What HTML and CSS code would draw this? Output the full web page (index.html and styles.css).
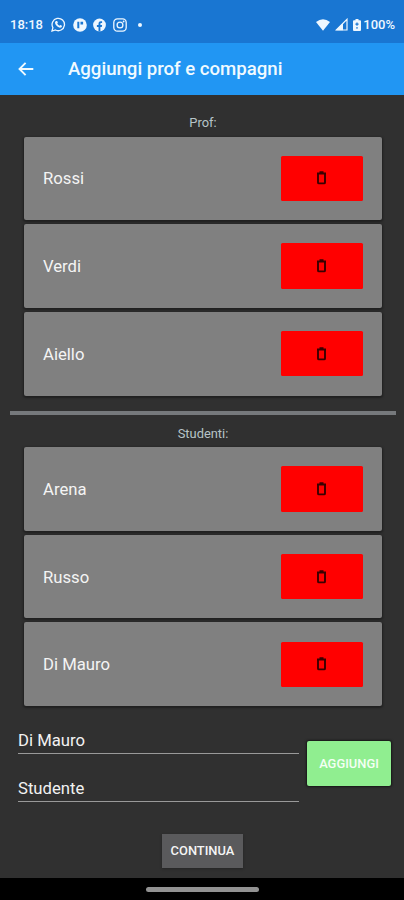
FILE: index.html
```html
<!DOCTYPE html>
<html lang="it">
<head>
<meta charset="utf-8">
<title>Aggiungi prof e compagni</title>
<link rel="stylesheet" href="styles.css">
</head>
<body>
<svg class="defs" aria-hidden="true">
  <symbol id="trash" viewBox="0 0 12 14">
    <path d="M1 2.500h9M3.500 1.200h4" fill="none" stroke="currentColor" stroke-width="2"/>
    <path d="M2 3v8.500q0 .9.9.9h5.200q.9 0 .9-.9V3" fill="none" stroke="currentColor" stroke-width="1.900"/>
  </symbol>
</svg>
<div class="screen">
  <header class="status">
    <span class="time">18:18</span>
    <div class="notifications">
      <svg width="15" height="15" viewBox="0 0 15 15"><path d="M1 14l.9-3.4A6.2 6.2 0 1 1 4.4 13z" fill="none" stroke="currentColor" stroke-width="1.3"/><path d="M5 3.900l1.200.1.7 1.700-.7.9c.5 1 1.200 1.600 2.200 2.100l.9-.8 1.700.8c.1 1.300-.8 2-1.900 2C6.700 10.500 4 7.700 4 5.600c0-.8.4-1.400 1-1.700z" fill="currentColor"/></svg>
      <svg width="14" height="14" viewBox="0 0 14 14"><circle cx="7" cy="7" r="6.800" fill="currentColor"/><path d="M4.300 3.800h2v6.400h-2zM7.500 3.800h2.600v2.600H7.500z" fill="#1976d2"/></svg>
      <svg width="13" height="14" viewBox="0 0 13 14"><circle cx="6.500" cy="7" r="6.400" fill="currentColor"/><path d="M5.500 13.500V9H3.900V7.100h1.600V5.700c0-1.700 1-2.500 2.400-2.500h1.200v1.700h-.8c-.7 0-.9.4-.9.900v1.300h1.700L8.800 9H7.400v4.500z" fill="#1976d2"/></svg>
      <svg width="14" height="14" viewBox="0 0 14 14"><rect x=".8" y=".8" width="12.400" height="12.400" rx="3.600" fill="none" stroke="currentColor" stroke-width="1.300"/><circle cx="7" cy="7" r="2.900" fill="none" stroke="currentColor" stroke-width="1.300"/><circle cx="10.600" cy="3.500" r=".9" fill="currentColor"/></svg>
      <i class="dot"></i>
    </div>
    <div class="system">
      <svg width="14" height="12" viewBox="0 0 14 12"><path d="M0 3Q7-2.400 14 3L7 11.800z" fill="currentColor"/></svg>
      <svg width="13" height="13" viewBox="0 0 13 13"><path d="M1.300 12L12 1.300V12z" fill="none" stroke="currentColor" stroke-width="1.200"/><path d="M1 12.300L8 5.300v7z" fill="currentColor"/></svg>
      <svg width="8" height="12" viewBox="0 0 8 12"><path d="M2.500 0h3v1.200H7q1 0 1 1V11q0 1-1 1H1q-1 0-1-1V2.200q0-1 1-1h1.500z" fill="currentColor"/><path d="M4 3.500v3.300M2.400 5.200h3.200M4 8v1.800" stroke="#1976d2" stroke-width="1.200"/></svg>
      <span>100%</span>
    </div>
  </header>
  <nav class="appbar">
    <svg width="16" height="14" viewBox="0 0 16 14"><path d="M7.600.8L1.500 7l6.100 6.200M1.600 7h13.700" fill="none" stroke="currentColor" stroke-width="1.900"/></svg>
    <h1>Aggiungi prof e compagni</h1>
  </nav>
  <main>
    <section class="group">
      <h2>Prof:</h2>
      <div class="list">
        <div class="card"><span>Rossi</span><button class="delete" aria-label="Elimina"><svg><use href="#trash"/></svg></button></div>
        <div class="card"><span>Verdi</span><button class="delete" aria-label="Elimina"><svg><use href="#trash"/></svg></button></div>
        <div class="card"><span>Aiello</span><button class="delete" aria-label="Elimina"><svg><use href="#trash"/></svg></button></div>
      </div>
    </section>
    <div class="divider"></div>
    <section class="group students">
      <h2>Studenti:</h2>
      <div class="list">
        <div class="card"><span>Arena</span><button class="delete" aria-label="Elimina"><svg><use href="#trash"/></svg></button></div>
        <div class="card"><span>Russo</span><button class="delete" aria-label="Elimina"><svg><use href="#trash"/></svg></button></div>
        <div class="card"><span>Di Mauro</span><button class="delete" aria-label="Elimina"><svg><use href="#trash"/></svg></button></div>
      </div>
    </section>
    <div class="form">
      <div class="fields">
        <div class="field">Di Mauro</div>
        <div class="field">Studente</div>
      </div>
      <button class="add">AGGIUNGI</button>
    </div>
    <button class="continue">CONTINUA</button>
  </main>
  <footer class="gesture"><i></i></footer>
</div>
</body>
</html>
```
FILE: styles.css
```css
* { box-sizing: border-box; }
body { margin: 0; background: #303030; font-family: Roboto, sans-serif; }
button { font: inherit; border: 0; padding: 0; }
svg { display: block; flex: none; }
h1, h2 { margin: 0; white-space: nowrap; }
.defs { position: absolute; width: 0; height: 0; }
.screen { width: 404px; height: 900px; display: flex; flex-direction: column; overflow: hidden; }

.status {
  height: 42.500px; flex: none; background: #1976d2; color: #eef7ff;
  display: flex; align-items: center; padding: 7px 9px 0 10px;
  font-size: 13px; font-weight: 500;
}
.time { width: 41px; }
.notifications { display: flex; align-items: center; gap: 6.500px; }
.dot { width: 4px; height: 4px; border-radius: 50%; background: #eef7ff; margin-left: 5px; }
.system { display: flex; align-items: center; margin-left: auto; }
.system svg { margin-right: 5px; }
.system svg:nth-of-type(3) { margin-right: 2px; }

.appbar {
  height: 52.500px; flex: none; background: #2196f3; color: #f0faff;
  display: flex; align-items: center; padding-left: 18px;
}
.appbar h1 { margin-left: 34px; padding-top: 1px; font-size: 18.600px; font-weight: 500; }

main { flex: 1; display: flex; flex-direction: column; background: #303030; }
.group { padding: 18px 22px 0 24px; }
.group h2 {
  height: 23.500px; line-height: 19px; text-align: center;
  font-size: 12.900px; font-weight: 400; color: #b7c4c8;
}
.list { display: flex; flex-direction: column; gap: 4px; }
.card {
  height: 83.700px; padding: 0 19px; border-radius: 2px; background: #808080; color: #f4f4f4;
  display: flex; align-items: center; justify-content: space-between;
  font-size: 16.700px; box-shadow: 0 1px 2px 1px #202020;
}
.card span { padding-top: 1px; }
.delete {
  width: 82.500px; height: 45.500px; border-radius: 1.500px; background: #f00; color: #3a0000;
  display: flex; align-items: center; justify-content: center;
}
.delete svg { width: 12px; height: 14px; }
.divider { height: 4px; margin: 15.500px 8px 0 10px; background: #76797c; }
.students { padding-top: 8.500px; }

.form { display: flex; align-items: center; padding: 17.500px 13px 0 18px; }
.fields { width: 281px; }
.field { height: 48px; padding-top: 7px; line-height: 20px; font-size: 16.700px; color: #f2f2f2; }
.field::after { content: ""; display: block; height: 1.500px; margin-top: 2px; background: #999; }
.add {
  width: 84px; height: 45.500px; margin: 0 0 16px 8px; border-radius: 2px; background: #90ee90; color: #f4fff4;
  font-size: 12.900px; font-weight: 500; box-shadow: 0 0 2px 1px #181818;
}
.continue {
  width: 81px; height: 34px; margin: 14px 0 0 162px; background: #5a5a5c; color: #f5f5f5;
  font-size: 12.900px; font-weight: 500; box-shadow: 0 1px 2px #252525;
}
.gesture { height: 22px; flex: none; background: #000; display: flex; justify-content: center; padding-top: 8.500px; }
.gesture i { width: 113px; height: 5px; border-radius: 2.500px; background: #929292; }
```
